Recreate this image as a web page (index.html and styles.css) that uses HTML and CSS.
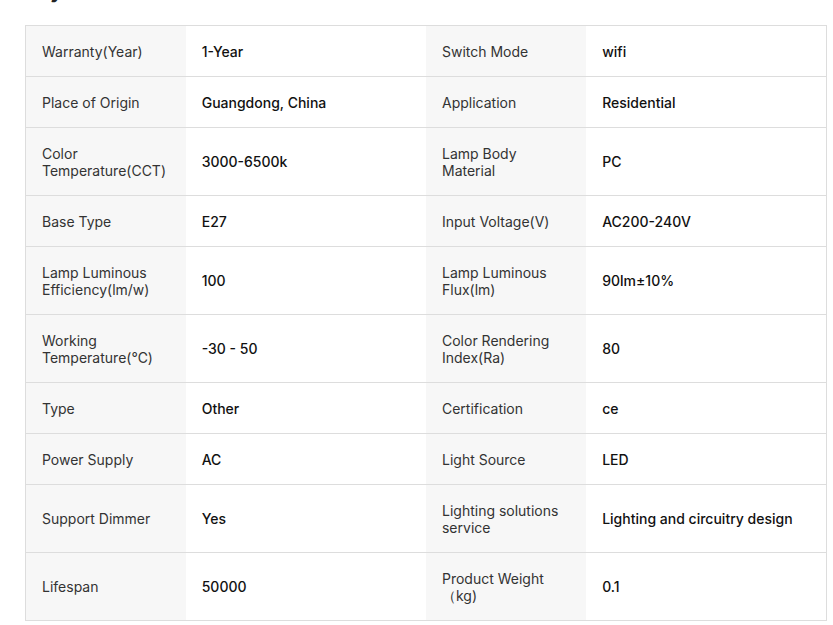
FILE: index.html
```html
<!DOCTYPE html>
<html lang="en">
<head>
<meta charset="utf-8">
<title>Key attributes</title>
<link rel="stylesheet" href="styles.css">
</head>
<body>
<div class="page">
  <h2 class="title">Key attributes</h2>
  <table class="attrs">
    <colgroup>
      <col class="c-label1"><col class="c-val"><col class="c-label2"><col class="c-val">
    </colgroup>
    <tbody>
      <tr><td class="lbl">Warranty(Year)</td><td class="val">1-Year</td><td class="lbl">Switch Mode</td><td class="val">wifi</td></tr>
      <tr><td class="lbl">Place of Origin</td><td class="val">Guangdong, China</td><td class="lbl">Application</td><td class="val">Residential</td></tr>
      <tr><td class="lbl">Color Temperature(CCT)</td><td class="val">3000-6500k</td><td class="lbl">Lamp Body Material</td><td class="val">PC</td></tr>
      <tr><td class="lbl">Base Type</td><td class="val">E27</td><td class="lbl">Input Voltage(V)</td><td class="val">AC200-240V</td></tr>
      <tr><td class="lbl">Lamp Luminous Efficiency(lm/w)</td><td class="val">100</td><td class="lbl">Lamp Luminous Flux(lm)</td><td class="val">90lm±10%</td></tr>
      <tr><td class="lbl">Working Temperature(℃)</td><td class="val">-30 - 50</td><td class="lbl">Color Rendering Index(Ra)</td><td class="val">80</td></tr>
      <tr><td class="lbl">Type</td><td class="val">Other</td><td class="lbl">Certification</td><td class="val">ce</td></tr>
      <tr><td class="lbl">Power Supply</td><td class="val">AC</td><td class="lbl">Light Source</td><td class="val">LED</td></tr>
      <tr><td class="lbl">Support Dimmer</td><td class="val">Yes</td><td class="lbl">Lighting solutions service</td><td class="val">Lighting and circuitry design</td></tr>
      <tr><td class="lbl">Lifespan</td><td class="val">50000</td><td class="lbl">Product Weight （kg)</td><td class="val">0.1</td></tr>
    </tbody>
  </table>
</div>
</body>
</html>
```

FILE: styles.css
```css
html, body {
  margin: 0;
  padding: 0;
  background: #ffffff;
}

body {
  font-family: Inter, "Noto Sans", "Liberation Sans", sans-serif;
  font-size: 14px;
  color: #222222;
}

.page {
  padding: 0 6px 0 25px;
}

.title {
  margin: -23px 0 20px 0;
  font-size: 20px;
  line-height: 28px;
  font-weight: 700;
  color: #222222;
}

.attrs {
  width: 802px;
  border-collapse: collapse;
  table-layout: fixed;
  border: 1px solid #dddddd;
}

.c-label1 { width: 160px; }
.c-label2 { width: 160px; }
.c-val { width: 240px; }

.attrs tr {
  border-bottom: 1px solid #dddddd;
}

.attrs td {
  padding: 16.5px 16px;
  line-height: 17px;
  vertical-align: middle;
  text-align: left;
}

.lbl {
  background: #f7f7f7;
  color: #333333;
}

.val {
  background: #ffffff;
  color: #111111;
  font-weight: 500;
}
```
